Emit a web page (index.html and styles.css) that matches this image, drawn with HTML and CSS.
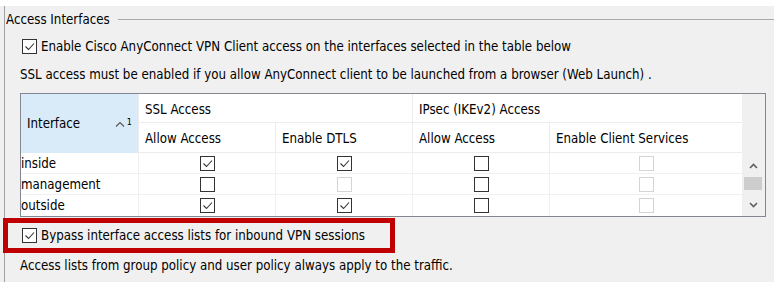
FILE: index.html
```html
<!DOCTYPE html>
<html lang="en">
<head>
<meta charset="utf-8">
<title>Access Interfaces</title>
<link rel="stylesheet" href="styles.css">
</head>
<body>
<div class="top-strip"></div>
<div class="panel">
  <div class="group">
    <div class="legend"><span class="legend-text">Access Interfaces</span><i class="rule"></i></div>

    <div class="check-row enable">
      <span class="cb on"><svg viewBox="0 0 13 13"><path d="M2.5 6.5 L5.5 9.5 L11 3.5"/></svg></span>
      <span>Enable Cisco AnyConnect VPN Client access on the interfaces selected in the table below</span>
    </div>

    <p class="note">SSL access must be enabled if you allow AnyConnect client to be launched from a browser (Web Launch) .</p>

    <div class="table">
      <div class="grid">
        <div class="h-iface">
          <span>Interface</span>
          <span class="sort">
            <svg viewBox="0 0 10 6"><path d="M1 5.5 L5 1.5 L9 5.5"/></svg><sup>1</sup>
          </span>
        </div>
        <div class="hc h-ssl">SSL Access</div>
        <div class="hc h-ipsec">IPsec (IKEv2) Access</div>
        <div class="corner"></div>

        <div class="hc h2 c2">Allow Access</div>
        <div class="hc h2 c3">Enable DTLS</div>
        <div class="hc h2 c4">Allow Access</div>
        <div class="hc h2 c5">Enable Client Services</div>

        <div class="name">inside</div>
        <div class="dc"><span class="cb on"><svg viewBox="0 0 13 13"><path d="M2.5 6.5 L5.5 9.5 L11 3.5"/></svg></span></div>
        <div class="dc"><span class="cb on"><svg viewBox="0 0 13 13"><path d="M2.5 6.5 L5.5 9.5 L11 3.5"/></svg></span></div>
        <div class="dc"><span class="cb"></span></div>
        <div class="dc"><span class="cb off"></span></div>

        <div class="name">management</div>
        <div class="dc"><span class="cb"></span></div>
        <div class="dc"><span class="cb off"></span></div>
        <div class="dc"><span class="cb"></span></div>
        <div class="dc"><span class="cb off"></span></div>

        <div class="name last">outside</div>
        <div class="dc last"><span class="cb on"><svg viewBox="0 0 13 13"><path d="M2.5 6.5 L5.5 9.5 L11 3.5"/></svg></span></div>
        <div class="dc last"><span class="cb on"><svg viewBox="0 0 13 13"><path d="M2.5 6.5 L5.5 9.5 L11 3.5"/></svg></span></div>
        <div class="dc last"><span class="cb"></span></div>
        <div class="dc last"><span class="cb off"></span></div>

        <div class="scrollbar">
          <div class="sb-btn up"><svg viewBox="0 0 9 6"><path d="M1 5 L4.5 1.5 L8 5"/></svg></div>
          <div class="thumb"></div>
          <div class="sb-btn down"><svg viewBox="0 0 9 6"><path d="M1 1 L4.5 4.5 L8 1"/></svg></div>
        </div>
      </div>
    </div>

    <div class="check-row bypass">
      <span class="cb on"><svg viewBox="0 0 13 13"><path d="M2.5 6.5 L5.5 9.5 L11 3.5"/></svg></span>
      <span>Bypass interface access lists for inbound VPN sessions</span>
      <span class="highlight"></span>
    </div>

    <p class="note last-note">Access lists from group policy and user policy always apply to the traffic.</p>
  </div>
</div>
</body>
</html>
```

FILE: styles.css
```css
html, body {
  margin: 0;
  padding: 0;
  background: #ffffff;
}

body {
  font-family: "DejaVu Sans Condensed", "DejaVu Sans", sans-serif;
  font-stretch: condensed;
  font-size: 13.2px;
  color: #000;
  width: 774px;
  height: 282px;
  overflow: hidden;
}

.top-strip {
  height: 6px;
  background: #ffffff;
}

.panel {
  background: #f0f0f0;
  height: 276px;
}

.group {
  margin-left: 4px;
  border-left: 1px solid #a0a0a0;
  height: 100%;
}

.legend {
  height: 26px;
  display: flex;
  align-items: center;
}

.legend-text {
  padding-left: 1px;
}

.rule {
  flex: 1;
  height: 1px;
  background: #a9a9a9;
  margin-left: 8px;
}

.check-row {
  display: flex;
  align-items: center;
  gap: 4px;
  padding-left: 17px;
}

.enable {
  height: 28px;
}

.note {
  margin: 0;
  height: 30px;
  line-height: 30px;
  padding-left: 15px;
  white-space: nowrap;
}

.cb {
  box-sizing: border-box;
  width: 15px;
  height: 15px;
  border: 1px solid #333333;
  background: #ffffff;
  display: inline-flex;
  flex: none;
}

.cb svg {
  width: 13px;
  height: 13px;
  fill: none;
  stroke: #333333;
  stroke-width: 1.1;
}

.cb.off {
  border-color: #d4d4d4;
}

.table {
  margin: 3px 0 0 15px;
  width: 746px;
  height: 124px;
  box-sizing: border-box;
  border: 1px solid #828790;
  background: #ffffff;
  overflow: hidden;
}

.grid {
  display: grid;
  grid-template-columns: 117px 137px 137px 137px 193px 23px;
  grid-template-rows: 29px 30px 21px 21px 21px;
}

.grid > div {
  box-sizing: border-box;
}

.h-iface {
  grid-row: 1 / 3;
  grid-column: 1;
  background: #d9ebf9;
  display: flex;
  align-items: center;
  justify-content: space-between;
  padding: 0 6px 0 6px;
}

.sort {
  display: flex;
  align-items: flex-start;
  gap: 2px;
  margin-top: -2px;
}

.sort svg {
  width: 10px;
  height: 6px;
  margin-top: 3px;
  fill: none;
  stroke: #555555;
  stroke-width: 1.1;
}

.sort sup {
  font-size: 9px;
  line-height: 9px;
  vertical-align: baseline;
}

.hc {
  display: flex;
  align-items: center;
  padding-left: 6px;
  border-left: 1px solid #ececec;
  border-bottom: 1px solid #ececec;
  white-space: nowrap;
}

.h-ssl {
  grid-row: 1;
  grid-column: 2 / 4;
  padding-top: 3px;
}

.h-ipsec {
  grid-row: 1;
  grid-column: 4 / 6;
  padding-top: 3px;
}

.corner {
  grid-row: 1 / 3;
  grid-column: 6;
  background: #f0f0f0;
}

.h2 {
  grid-row: 2;
  padding-top: 2px;
}

.c2 { grid-column: 2; }
.c3 { grid-column: 3; }
.c4 { grid-column: 4; }
.c5 { grid-column: 5; }

.name {
  grid-column: 1;
  display: flex;
  align-items: center;
  border-bottom: 1px solid #f0f0f0;
}

.dc {
  display: flex;
  align-items: center;
  justify-content: center;
  border-left: 1px solid #f0f0f0;
  border-bottom: 1px solid #f0f0f0;
  overflow: hidden;
}

.grid > .last {
  border-bottom: none;
  align-items: flex-start;
  padding-top: 3px;
}

.scrollbar {
  grid-column: 6;
  grid-row: 3 / 6;
  background: #f0f0f0;
  display: flex;
  flex-direction: column;
}

.sb-btn {
  display: flex;
  align-items: center;
  justify-content: center;
}

.sb-btn svg {
  width: 9px;
  height: 6px;
  fill: none;
  stroke: #606060;
  stroke-width: 1.6;
}

.up {
  height: 23px;
  padding-top: 2px;
  box-sizing: border-box;
}

.thumb {
  height: 13px;
  margin: 1px 3px 0 2px;
  background: #cdcdcd;
}

.down {
  flex: 1;
  padding-top: 3px;
}

.bypass {
  position: relative;
  height: 35px;
  margin-top: 1px;
}

.highlight {
  position: absolute;
  left: -2px;
  top: 0;
  width: 392px;
  height: 35px;
  box-sizing: border-box;
  border: 5px solid #c00000;
}

.last-note {
  height: 26px;
  line-height: 26px;
}
```
